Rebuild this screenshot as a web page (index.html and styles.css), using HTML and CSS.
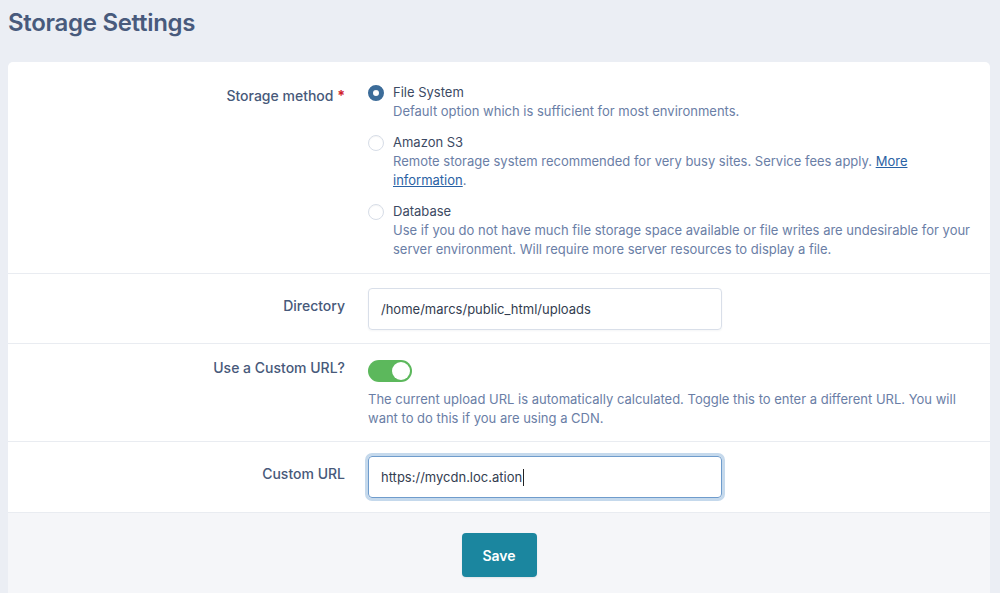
FILE: index.html
```html
<!DOCTYPE html>
<html lang="en">
<head>
<meta charset="utf-8">
<title>Storage Settings</title>
<link rel="stylesheet" href="styles.css">
</head>
<body>
<h1 class="page-title">Storage Settings</h1>
<form class="card">
  <div class="row row-first">
    <div class="label">Storage method <span class="req">*</span></div>
    <div class="control">
      <div class="option">
        <span class="radio radio-on"></span>
        <div class="option-body">
          <div class="option-title">File System</div>
          <div class="desc">Default option which is sufficient for most environments.</div>
        </div>
      </div>
      <div class="option">
        <span class="radio"></span>
        <div class="option-body">
          <div class="option-title">Amazon S3</div>
          <div class="desc">Remote storage system recommended for very busy sites. Service fees apply. <a href="#" class="link">More information</a>.</div>
        </div>
      </div>
      <div class="option">
        <span class="radio"></span>
        <div class="option-body">
          <div class="option-title">Database</div>
          <div class="desc">Use if you do not have much file storage space available or file writes are undesirable for your server environment. Will require more server resources to display a file.</div>
        </div>
      </div>
    </div>
  </div>
  <div class="row row-input">
    <div class="label label-input">Directory</div>
    <div class="control">
      <div class="input">/home/marcs/public_html/uploads</div>
    </div>
  </div>
  <div class="row row-toggle">
    <div class="label label-toggle">Use a Custom URL?</div>
    <div class="control">
      <span class="toggle"><span class="knob"></span></span>
      <div class="desc toggle-desc">The current upload URL is automatically calculated. Toggle this to enter a different URL. You will want to do this if you are using a CDN.</div>
    </div>
  </div>
  <div class="row row-input row-last">
    <div class="label label-input">Custom URL</div>
    <div class="control">
      <div class="input input-focus">https://mycdn.loc.ation<span class="caret"></span></div>
    </div>
  </div>
  <div class="footer">
    <button type="button" class="btn">Save</button>
  </div>
</form>
</body>
</html>
```
FILE: styles.css
```css
html, body {
  margin: 0;
  padding: 0;
}
body {
  background: #ebeef4;
  font-family: Inter, "Noto Sans", "Liberation Sans", sans-serif;
  color: #47597a;
  padding: 0 10px 0 8px;
}
.page-title {
  margin: 0;
  padding: 9px 0 0 0;
  height: 62px;
  box-sizing: border-box;
  font-size: 24px;
  font-weight: 600;
  letter-spacing: -0.3px;
  color: #485a7c;
  line-height: 28px;
}
.card {
  background: #fff;
  border-radius: 5px;
  overflow: hidden;
  display: block;
}
.row {
  display: grid;
  grid-template-columns: 337px 1fr;
  column-gap: 23px;
  padding: 14px 14px 14px 0;
  border-bottom: 1px solid #e9ecf1;
}
.row-first {
  padding-top: 21px;
  padding-bottom: 14px;
}
.row-input {
  padding-top: 14px;
  padding-bottom: 13px;
}
.row-last {
  padding-bottom: 14px;
}
.row-toggle {
  padding-top: 14px;
  padding-bottom: 13px;
}
.label {
  text-align: right;
  font-size: 14px;
  font-weight: 500;
  color: #47597a;
  line-height: 19px;
  padding-top: 3px;
}
.label-input {
  padding-top: 8px;
}
.label-toggle {
  padding-top: 0;
}
.req {
  color: #d0202a;
  font-weight: 700;
}
.control {
  min-width: 0;
}
.option {
  display: flex;
  align-items: flex-start;
  column-gap: 9px;
  margin-bottom: 12px;
}
.option:last-child {
  margin-bottom: 0;
}
.radio {
  flex: none;
  width: 16px;
  height: 16px;
  box-sizing: border-box;
  border-radius: 50%;
  border: 1px solid #d7dde7;
  background: #fff;
  margin-top: 2px;
  box-shadow: inset 0 1px 1px rgba(0,0,0,0.04);
}
.radio-on {
  border: 5px solid #3c6c99;
  background: #fff;
}
.option-title {
  font-size: 13px;
  line-height: 19px;
  color: #3c4a63;
}
.desc {
  font-size: 13px;
  line-height: 19px;
  color: #6a7ea6;
}
.link {
  color: #2a62a4;
  text-decoration: underline;
  text-underline-offset: 1px;
}
.input {
  width: 354px;
  height: 42px;
  box-sizing: border-box;
  border: 1px solid #d9dfe9;
  border-radius: 4px;
  padding: 0 12px;
  font-size: 13px;
  color: #333d50;
  display: flex;
  align-items: center;
  box-shadow: 0 1px 2px rgba(30,50,90,0.05);
}
.input-focus {
  border-color: #6f9ccc;
  box-shadow: 0 0 0 3px #c5d9ec;
}
.caret {
  display: inline-block;
  width: 1px;
  height: 17px;
  background: #222;
  margin-left: 1px;
}
.toggle {
  display: flex;
  justify-content: flex-end;
  align-items: center;
  width: 44px;
  height: 22px;
  box-sizing: border-box;
  border-radius: 11px;
  background: #5cb85c;
  padding: 2px;
  margin-top: 2px;
}
.knob {
  width: 18px;
  height: 18px;
  border-radius: 50%;
  background: #fff;
}
.toggle-desc {
  margin-top: 8px;
}
.footer {
  background: #f5f6f9;
  padding: 20px 0 20px 0;
  display: flex;
  justify-content: center;
}
.btn {
  width: 75px;
  height: 44px;
  border: none;
  border-radius: 4px;
  background: #1b869f;
  color: #fff;
  font-family: Inter, "Noto Sans", "Liberation Sans", sans-serif;
  font-size: 14px;
  font-weight: 600;
  box-shadow: 0 1px 2px rgba(0,0,0,0.08);
}
```
